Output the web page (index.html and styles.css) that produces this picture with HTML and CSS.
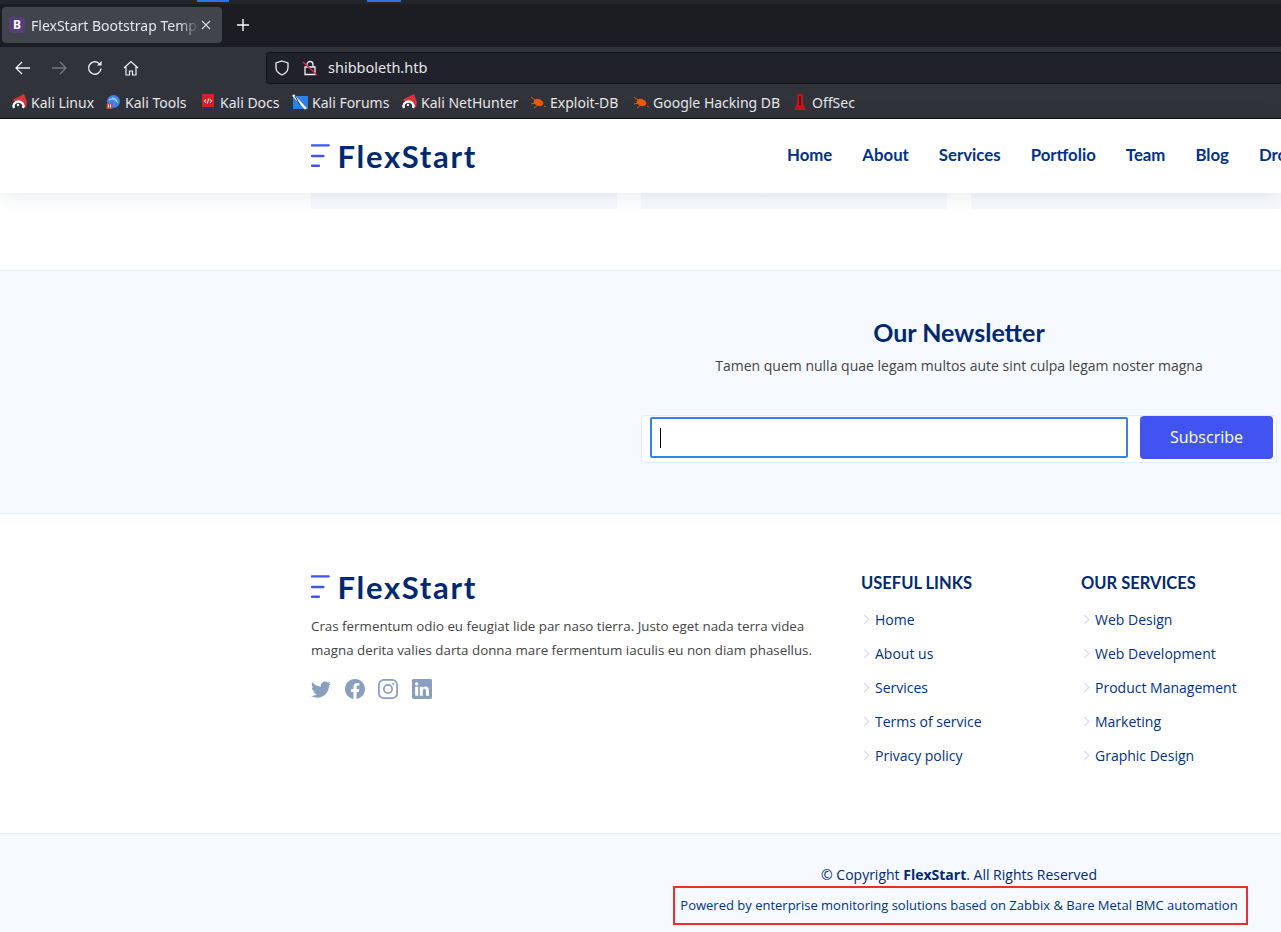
FILE: index.html
```html
<!DOCTYPE html>
<html lang="en">
<head>
  <meta charset="UTF-8">
  <title>FlexStart Bootstrap Template</title>
  <link rel="stylesheet" href="styles.css">
</head>
<body>
  <div class="browser">
    <div class="tabbar">
      <div class="marks"><span class="mark mark-a"></span><span class="mark mark-b"></span></div>
      <div class="tabrow">
        <div class="tab">
          <span class="favicon">B</span>
          <span class="tab-title">FlexStart Bootstrap Template</span>
          <svg class="tab-close" width="10" height="10" viewBox="0 0 10 10"><path d="M1 1l8 8M9 1l-8 8" stroke="#d8d8dc" stroke-width="1.1"/></svg>
        </div>
        <svg class="newtab" width="12" height="12" viewBox="0 0 12 12"><path d="M6 0v12M0 6h12" stroke="#fbfbfe" stroke-width="1.4"/></svg>
      </div>
    </div>
    <div class="toolbar">
      <div class="navbtns">
        <svg width="16" height="16" viewBox="0 0 16 16" fill="none" stroke="#eeeef0" stroke-width="1.3"><path d="M1 8h14M7 2L1 8l6 6"/></svg>
        <svg width="16" height="16" viewBox="0 0 16 16" fill="none" stroke="#77787c" stroke-width="1.3"><path d="M1 8h14M9 2l6 6-6 6"/></svg>
        <svg width="16" height="16" viewBox="0 0 16 16" fill="none" stroke="#eeeef0" stroke-width="1.4"><path d="M14 8.500A6.200 6.200 0 1 1 12 3.400"/><path d="M14.600 1v4.600H10" fill="#eeeef0" stroke="none"/></svg>
        <svg width="16" height="16" viewBox="0 0 16 16" fill="none" stroke="#eeeef0" stroke-width="1.2"><path d="M1 8l7-6.500L15 8M3 6.500V15h3.500v-4h3v4H13V6.500"/></svg>
      </div>
      <div class="urlbar">
        <svg width="16" height="16" viewBox="0 0 16 16" fill="none" stroke="#eeeef0" stroke-width="1.3"><path d="M8 1l6 2v4.500c0 3.500-2.500 6-6 7.500-3.500-1.500-6-4-6-7.500V3z"/></svg>
        <svg class="lock" width="16" height="16" viewBox="0 0 16 16" fill="none"><path d="M5 7V4.500a3 3 0 0 1 6 0V7M3 7h10v7.500H3z" stroke="#eeeef0" stroke-width="1.300"/><path d="M1 2l14 13" stroke="#e22850" stroke-width="1.500"/></svg>
        <span class="url">shibboleth.htb</span>
      </div>
    </div>
    <div class="bookmarks">
      <a class="bm bm-1"><svg width="16" height="16" viewBox="0 0 16 16"><path d="M1 6L13 0l3 8-1 6-5-5z" fill="#d6363a"/><path d="M12 14A5 4.500 0 1 0 3 14" fill="none" stroke="#fff" stroke-width="2.400"/><circle cx="7" cy="11" r="1.200" fill="#fff"/></svg>Kali Linux</a>
      <a class="bm bm-2"><svg width="16" height="16" viewBox="0 0 16 16"><circle cx="8.500" cy="7.500" r="6.500" fill="#3c84f0"/><path d="M4 6c3-2 6-1 9 3M7 4c2 0 4 1 5 3" stroke="#cfe0fb" fill="none"/><rect x="1.500" y="9" width="6" height="6" rx="1.500" fill="#e04438"/><path d="M3.500 10.500v3M5.500 10.500v3" stroke="#fff"/></svg>Kali Tools</a>
      <a class="bm bm-3"><svg width="16" height="16" viewBox="0 0 16 16"><rect x="2" y="0" width="12" height="16" fill="#d81f26"/><rect x="2" y="13" width="12" height="3" fill="#20346e"/><path d="M6 5L4.500 7 6 9M10 5l1.500 2L10 9M8.700 4.500L7.300 9.500" stroke="#fff" fill="none"/></svg>Kali Docs</a>
      <a class="bm bm-4"><svg width="16" height="16" viewBox="0 0 16 16"><path d="M1 2h15v13H1z" fill="#2f7fe6"/><path d="M1 1l13 14" stroke="#fff" stroke-width="2.500"/><path d="M3 2l5 9" stroke="#20242c"/></svg>Kali Forums</a>
      <a class="bm bm-5"><svg width="16" height="16" viewBox="0 0 16 16"><path d="M1 6L13 0l3 8-1 6-5-5z" fill="#d6363a"/><path d="M12 14A5 4.500 0 1 0 3 14" fill="none" stroke="#fff" stroke-width="2.400"/><circle cx="7" cy="11" r="1.200" fill="#fff"/></svg>Kali NetHunter</a>
      <a class="bm bm-6"><svg width="16" height="16" viewBox="0 0 16 16"><ellipse cx="8.500" cy="8.500" rx="5" ry="3.500" fill="#e8590c" transform="rotate(20 8.500 8.500)"/><path d="M1 3l5 4M1 10l5-1M4 14l4-3M14 12l2 1" stroke="#e8590c"/></svg>Exploit-DB</a>
      <a class="bm bm-7"><svg width="16" height="16" viewBox="0 0 16 16"><ellipse cx="8.500" cy="8.500" rx="5" ry="3.500" fill="#e8590c" transform="rotate(20 8.500 8.500)"/><path d="M1 3l5 4M1 10l5-1M4 14l4-3M14 12l2 1" stroke="#e8590c"/></svg>Google Hacking DB</a>
      <a class="bm bm-8"><svg width="16" height="16" viewBox="0 0 16 16"><path d="M5.500 0h5l.5 9 3 7H2l3-7z" fill="#c8141e"/><path d="M8 2v9" stroke="#3a0508" stroke-width="1.500"/></svg>OffSec</a>
    </div>
  </div>

  <header class="header">
    <div class="logo">
      <svg width="22" height="26" viewBox="0 0 22 26"><path d="M1 1h19M1 13h13M1 24h8" stroke="#4154f1" stroke-width="2.600" stroke-linecap="round"/></svg>
      <span class="logo-text">FlexStart</span>
    </div>
    <nav class="nav">
      <a>Home</a><a>About</a><a>Services</a><a>Portfolio</a><a>Team</a><a>Blog</a><a>Drop Down</a>
    </nav>
  </header>

  <main class="page">
    <div class="cards">
      <div class="card"></div>
      <div class="card"></div>
      <div class="card card-last"></div>
    </div>

    <section class="newsletter">
      <div class="news-col">
        <h4>Our Newsletter</h4>
        <p>Tamen quem nulla quae legam multos aute sint culpa legam noster magna</p>
        <form class="news-form">
          <div class="news-input"><span class="caret"></span></div>
          <button type="button">Subscribe</button>
        </form>
      </div>
    </section>

    <section class="foot-top">
      <div class="foot-info">
        <div class="logo logo-foot">
          <svg width="22" height="26" viewBox="0 0 22 26"><path d="M1 1h19M1 13h13M1 24h8" stroke="#4154f1" stroke-width="2.600" stroke-linecap="round"/></svg>
          <span class="logo-text">FlexStart</span>
        </div>
        <p>Cras fermentum odio eu feugiat lide par naso tierra. Justo eget nada terra videa magna derita valies darta donna mare fermentum iaculis eu non diam phasellus.</p>
        <div class="social">
          <svg width="20" height="20" viewBox="0 0 16 16"><path d="M5.026 15c6.038 0 9.341-5.003 9.341-9.334 0-.14 0-.282-.006-.422A6.685 6.685 0 0 0 16 3.542a6.658 6.658 0 0 1-1.889.518 3.301 3.301 0 0 0 1.447-1.817 6.533 6.533 0 0 1-2.087.793A3.286 3.286 0 0 0 7.875 6.030a9.325 9.325 0 0 1-6.767-3.429 3.289 3.289 0 0 0 1.018 4.382A3.323 3.323 0 0 1 .64 6.575v.045a3.288 3.288 0 0 0 2.632 3.218 3.203 3.203 0 0 1-.865.115 3.230 3.230 0 0 1-.614-.057 3.283 3.283 0 0 0 3.067 2.277A6.588 6.588 0 0 1 .78 13.580a6.320 6.320 0 0 1-.78-.045A9.344 9.344 0 0 0 5.026 15z"/></svg>
          <svg width="20" height="20" viewBox="0 0 16 16"><path d="M16 8.049c0-4.446-3.582-8.050-8-8.050C3.580 0-.002 3.603-.002 8.050c0 4.017 2.926 7.347 6.750 7.951v-5.625h-2.030V8.050H6.750V6.275c0-2.017 1.195-3.131 3.022-3.131.876 0 1.791.157 1.791.157v1.980h-1.009c-.993 0-1.303.621-1.303 1.258v1.510h2.218l-.354 2.326H9.250V16c3.824-.604 6.750-3.934 6.750-7.951z"/></svg>
          <svg class="ig" width="20" height="20" viewBox="0 0 16 16"><rect x=".7" y=".7" width="14.600" height="14.600" rx="4"/><circle cx="8" cy="8" r="3.300"/><circle class="ig-dot" cx="12.200" cy="3.800" r=".9"/></svg>
          <svg width="20" height="20" viewBox="0 0 16 16"><path d="M0 1.146C0 .513.526 0 1.175 0h13.650C15.474 0 16 .513 16 1.146v13.708c0 .633-.526 1.146-1.175 1.146H1.175C.526 16 0 15.487 0 14.854V1.146zm4.943 12.248V6.169H2.542v7.225h2.401zm-1.200-8.212c.837 0 1.358-.554 1.358-1.248-.015-.709-.520-1.248-1.342-1.248-.822 0-1.359.540-1.359 1.248 0 .694.521 1.248 1.327 1.248h.016zm4.908 8.212V9.359c0-.216.016-.432.080-.586.173-.431.568-.878 1.232-.878.869 0 1.216.662 1.216 1.634v3.865h2.401V9.250c0-2.220-1.184-3.252-2.764-3.252-1.274 0-1.845.700-2.165 1.193v.025h-.016a5.540 5.540 0 0 1 .016-.025V6.169h-2.400c.030.678 0 7.225 0 7.225h2.400z"/></svg>
        </div>
      </div>
      <div class="foot-links">
        <h4>USEFUL LINKS</h4>
        <ul>
          <li>Home</li>
          <li>About us</li>
          <li>Services</li>
          <li>Terms of service</li>
          <li>Privacy policy</li>
        </ul>
      </div>
      <div class="foot-links">
        <h4>OUR SERVICES</h4>
        <ul>
          <li>Web Design</li>
          <li>Web Development</li>
          <li>Product Management</li>
          <li>Marketing</li>
          <li>Graphic Design</li>
        </ul>
      </div>
    </section>

    <section class="foot-bottom">
      <div class="copyright">© Copyright <strong>FlexStart</strong>. All Rights Reserved</div>
      <div class="powered">Powered by enterprise monitoring solutions based on Zabbix &amp; Bare Metal BMC automation</div>
    </section>
  </main>
</body>
</html>
```

FILE: styles.css
```css
html, body {
  margin: 0;
  padding: 0;
  height: 932px;
  overflow: hidden;
}
body {
  font-family: "Open Sans", sans-serif;
  background: #fff;
  color: #444;
}

/* browser chrome */
.browser {
  height: 119px;
  box-sizing: border-box;
  border-bottom: 1px solid #0c0c0d;
  font-family: "Noto Sans", sans-serif;
  color: #e6e6e8;
}
.tabbar {
  height: 47px;
  background: #1c1d23;
}
.marks {
  height: 4px;
  background: #24252b;
  display: flex;
}
.mark {
  height: 2px;
  background: #2b74e8;
}
.mark-a {
  width: 32px;
  margin-left: 197px;
}
.mark-b {
  width: 34px;
  margin-left: 138px;
}
.tabrow {
  display: flex;
  align-items: center;
  padding: 3px 0 0 2px;
}
.tab {
  width: 220px;
  height: 36px;
  box-sizing: border-box;
  padding-left: 7px;
  background: #42444b;
  border-radius: 4px;
  display: flex;
  align-items: center;
}
.favicon {
  width: 16px;
  height: 16px;
  border-radius: 3px;
  background: #563d7c;
  color: #fff;
  font-size: 12px;
  font-weight: 700;
  text-align: center;
  line-height: 16px;
  flex: none;
}
.tab-title {
  width: 168px;
  margin-left: 6px;
  font-size: 14px;
  white-space: nowrap;
  overflow: hidden;
  flex: none;
  -webkit-mask-image: linear-gradient(to right, #000 88%, transparent);
  mask-image: linear-gradient(to right, #000 88%, transparent);
}
.tab-close {
  margin-left: 2px;
  flex: none;
}
.newtab {
  margin-left: 15px;
}
.toolbar {
  height: 41px;
  background: #31333b;
  display: flex;
  align-items: center;
}
.navbtns {
  display: flex;
  gap: 20px;
  padding-left: 15px;
  width: 266px;
  box-sizing: border-box;
  flex: none;
}
.urlbar {
  flex: 1;
  height: 32px;
  box-sizing: border-box;
  background: #20212a;
  border: 1px solid #111217;
  border-right: none;
  border-radius: 4px 0 0 4px;
  display: flex;
  align-items: center;
  padding-left: 7px;
}
.lock {
  margin-left: 12px;
}
.url {
  margin-left: 10px;
  font-size: 14.500px;
  padding-bottom: 2px;
}
.bookmarks {
  height: 30px;
  box-sizing: border-box;
  background: #31333b;
  display: flex;
  align-items: center;
  padding: 0 0 2px 11px;
  font-size: 14px;
}
.bm {
  display: flex;
  align-items: center;
  gap: 4px;
  white-space: nowrap;
}
.bm-1 { width: 94px; }
.bm-2 { width: 95px; }
.bm-3 { width: 92px; }
.bm-4 { width: 109px; }
.bm-5 { width: 129px; }
.bm-6 { width: 103px; }
.bm-7 { width: 159px; }

/* site header */
.header {
  height: 74px;
  background: #fff;
  box-shadow: 0 2px 20px rgba(1, 41, 112, 0.1);
  display: flex;
  align-items: center;
  padding-left: 311px;
  position: relative;
  white-space: nowrap;
}
.logo {
  display: flex;
  align-items: center;
  gap: 7px;
  width: 166px;
  flex: none;
}
.logo-text {
  font-family: Lato, sans-serif;
  font-size: 31px;
  font-weight: 700;
  color: #012970;
  letter-spacing: 1.700px;
}
.nav {
  margin-left: 310px;
  padding-bottom: 3px;
  display: flex;
  gap: 30px;
  font-family: Lato, sans-serif;
  font-size: 16.800px;
  font-weight: 700;
  color: #013289;
  flex: none;
}

/* page */
.cards {
  height: 77px;
  display: flex;
  gap: 24px;
  padding-left: 311px;
}
.card {
  width: 306px;
  height: 16px;
  background: linear-gradient(#f7f8fc, #f8f9fc);
}
.card-last {
  width: 310px;
}
.newsletter {
  height: 244px;
  box-sizing: border-box;
  background: #f6f9ff;
  border-top: 1px solid #e1ecff;
  border-bottom: 1px solid #e1ecff;
  padding: 47px 4px 0 641px;
}
.news-col {
  text-align: center;
}
.news-col h4 {
  margin: 0;
  font-family: Lato, sans-serif;
  font-size: 25px;
  font-weight: 700;
  line-height: 28px;
  color: #012970;
}
.news-col p {
  margin: 8px 0 0;
  font-size: 14px;
  line-height: 24px;
}
.news-form {
  margin-top: 37px;
  height: 48px;
  box-sizing: border-box;
  background: #fff;
  border: 1px solid #e1ecff;
  border-radius: 4px;
  padding: 0 3px 0 8px;
  display: flex;
  align-items: flex-start;
  gap: 12px;
}
.news-input {
  flex: 1;
  height: 41px;
  margin-top: 1px;
  box-sizing: border-box;
  border: 2px solid #3584e4;
  border-radius: 2px;
  background: #fff;
  display: flex;
  align-items: center;
  padding-left: 8px;
}
.caret {
  width: 1px;
  height: 20px;
  background: #000;
}
.news-form button {
  width: 133px;
  height: 43px;
  border: none;
  border-radius: 4px;
  padding: 0 0 2px;
  background: #4154f1;
  color: #fff;
  font-family: "Open Sans", sans-serif;
  font-size: 16px;
}
.foot-top {
  height: 319px;
  box-sizing: border-box;
  padding: 56px 0 0 311px;
  display: flex;
}
.foot-info {
  width: 550px;
  flex: none;
}
.logo-foot {
  height: 34px;
}
.foot-info p {
  margin: 10px 0 0;
  width: 510px;
  font-size: 13.350px;
  line-height: 24px;
}
.social {
  margin-top: 17px;
  display: flex;
  gap: 13.700px;
}
.social svg {
  fill: #8a9ebf;
}
.social .ig {
  fill: none;
  stroke: #8a9ebf;
  stroke-width: 1.400;
}
.social .ig-dot {
  fill: #8a9ebf;
  stroke: none;
}
.foot-links {
  width: 220px;
  flex: none;
}
.foot-links h4 {
  margin: 3px 0 0;
  font-family: Lato, sans-serif;
  font-size: 16.500px;
  font-weight: 700;
  line-height: 20px;
  color: #012970;
}
.foot-links ul {
  list-style: none;
  margin: 10px 0 0;
  padding: 0;
}
.foot-links li {
  height: 34px;
  line-height: 34px;
  font-size: 14px;
  color: #013289;
  padding-left: 14px;
  position: relative;
}
.foot-links li::before {
  content: "";
  position: absolute;
  left: 0;
  top: 13px;
  width: 6px;
  height: 6px;
  border-top: 1px solid #d0d4fc;
  border-right: 1px solid #d0d4fc;
  transform: rotate(45deg);
}
.foot-bottom {
  height: 99px;
  box-sizing: border-box;
  background: #f6f9ff;
  border-top: 1px solid #e1ecff;
  padding: 31px 4px 0 641px;
  text-align: center;
  color: #012970;
  font-size: 14px;
}
.copyright {
  line-height: 20px;
}
.powered {
  margin: 1px 0 0 32px;
  width: 575px;
  height: 39px;
  box-sizing: border-box;
  border: 2px solid #f22c2c;
  padding-right: 3px;
  font-size: 13px;
  line-height: 35px;
  color: #013289;
  white-space: nowrap;
}
```
